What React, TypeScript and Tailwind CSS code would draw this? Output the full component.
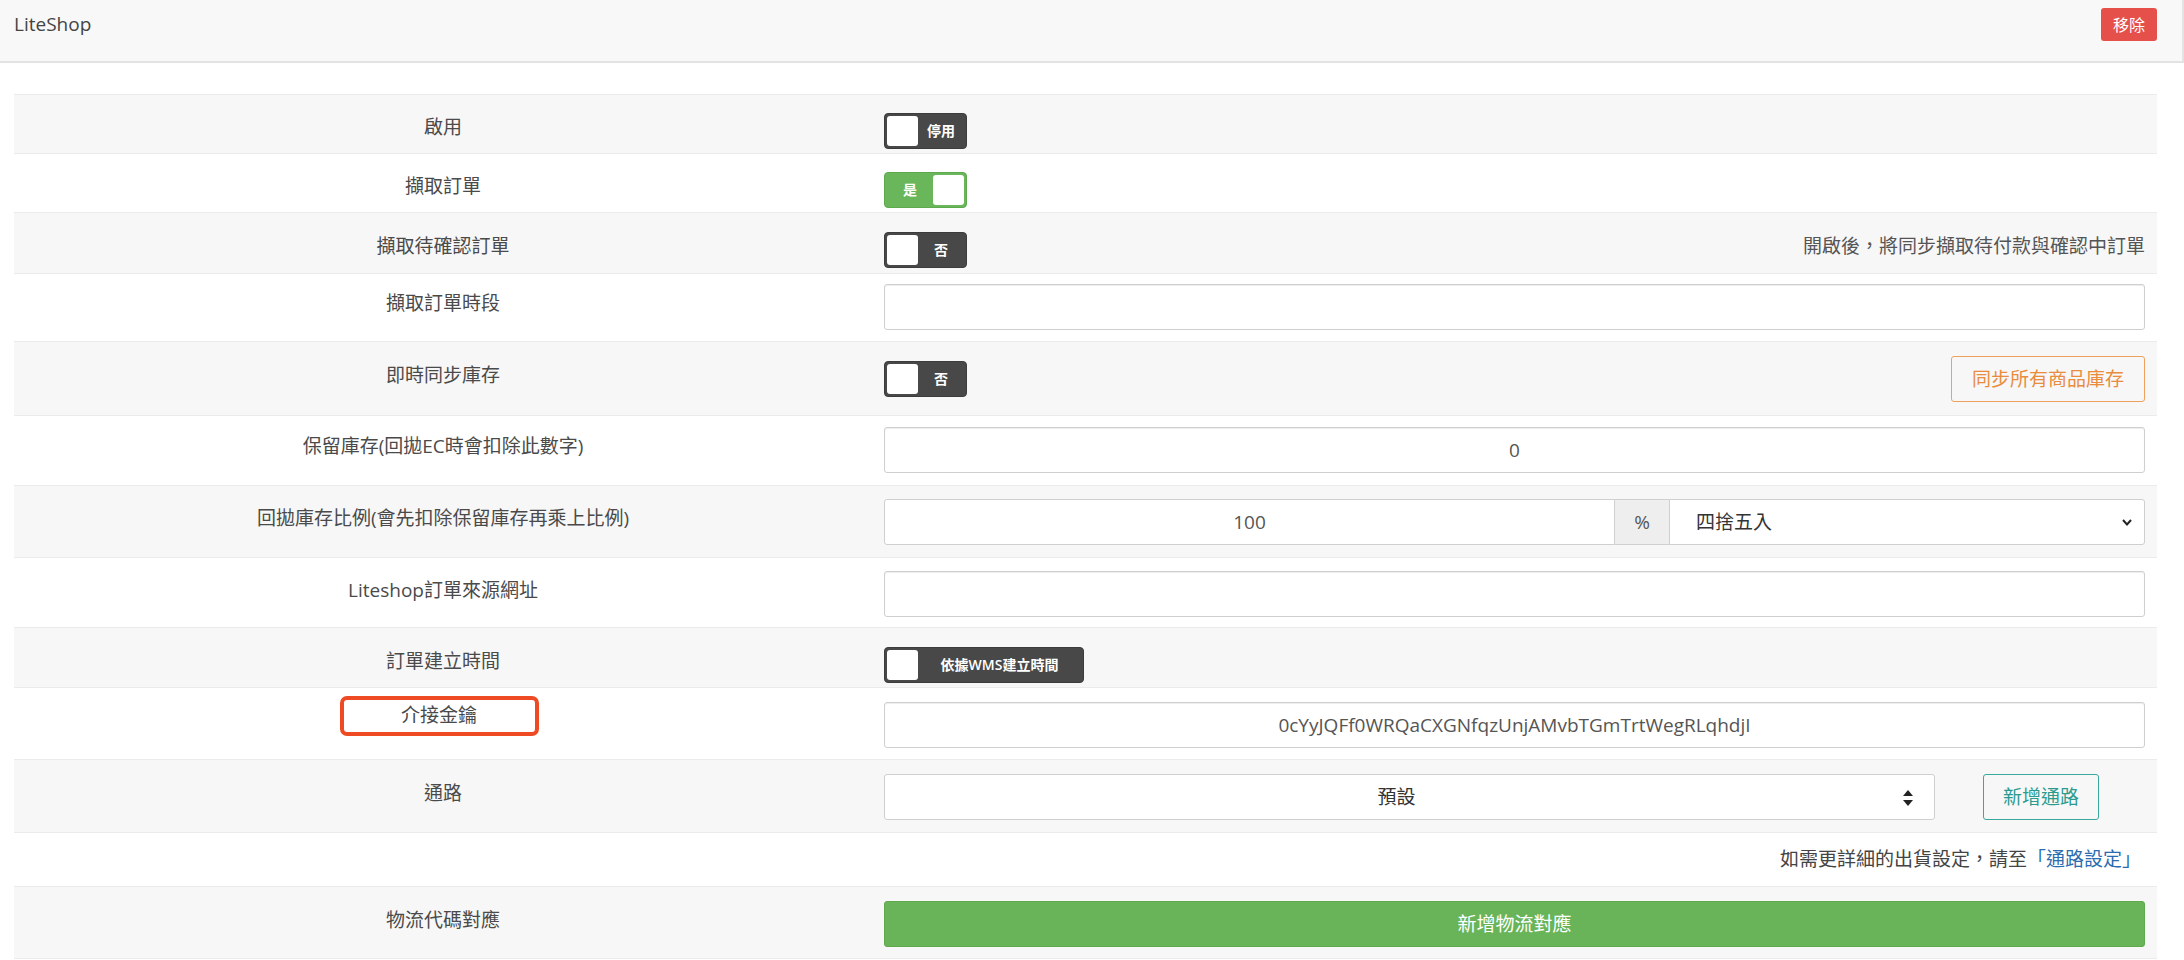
import type { ReactNode } from 'react'

const font = "font-['Open_Sans','Noto_Sans_CJK_TC',sans-serif]"

type ToggleProps = { on?: boolean; text: string; wide?: boolean }

const Toggle = ({ on = false, text, wide = false }: ToggleProps) => {
  if (on) {
    return (
      <div className="flex h-[36px] w-[83px] items-center rounded-[4px] border border-[#5ea94e] bg-[#6ab65a] p-[2px]">
        <span className="flex-1 text-center text-[14px] leading-[20px] font-semibold text-white">{text}</span>
        <span className="h-full w-[31px] rounded-[3px] bg-white" />
      </div>
    )
  }
  return (
    <div
      className={`flex h-[36px] items-center rounded-[4px] border border-[#3c3c3c] bg-[#484848] p-[2px] ${wide ? 'w-[200px]' : 'w-[83px]'}`}
    >
      <span className="h-full w-[31px] rounded-[3px] bg-white" />
      <span className="flex-1 text-center text-[14px] leading-[20px] font-semibold text-white">{text}</span>
    </div>
  )
}

const Input = ({ value = '' }: { value?: string }) => (
  <div className="flex h-[46px] w-full items-center justify-center rounded-[3px] border border-[#cfcfcf] bg-white text-[19px] leading-[26px] text-[#555] shadow-[inset_0_1px_1px_rgba(0,0,0,0.075)]">
    {value}
  </div>
)

type RowProps = { label: ReactNode; pad: string; grey?: boolean; children?: ReactNode }

const Row = ({ label, pad, grey = false, children }: RowProps) => (
  <div className={`flex items-center border-b border-[#ebebeb] ${pad} ${grey ? 'bg-[#f7f7f7]' : 'bg-white'}`}>
    <div className="flex w-[858px] shrink-0 justify-center px-[12px] pb-[8px] text-[19px] leading-[26px] text-[#4a4a4a]">
      {label}
    </div>
    <div className="flex flex-1 items-center px-[12px]">{children}</div>
  </div>
)

export default function App() {
  return (
    <div className={`min-h-screen bg-white ${font}`}>
      <div className="flex h-[63px] items-start justify-between border-b-2 border-r-2 border-[#e3e3e3] bg-[#f8f8f8] pl-[14px] pr-[25px] pt-[8px]">
        <span className="text-[19px] leading-[33px] text-[#444]">LiteShop</span>
        <button className="h-[33px] w-[56px] rounded-[3px] bg-[#e5504b] text-[16px] text-white">移除</button>
      </div>

      <div className="ml-[14px] mr-[27px] mt-[31px] border-t border-[#ebebeb]">
        <Row label="啟用" pad="pt-[18px] pb-[4px]" grey>
          <Toggle text="停用" />
        </Row>
        <Row label="擷取訂單" pad="pt-[18px] pb-[4px]">
          <Toggle on text="是" />
        </Row>
        <Row label="擷取待確認訂單" pad="pt-[19px] pb-[5px]" grey>
          <div className="flex w-full items-center justify-between">
            <Toggle text="否" />
            <span className="pb-[8px] text-[19px] leading-[26px] text-[#555]">開啟後，將同步擷取待付款與確認中訂單</span>
          </div>
        </Row>
        <Row label="擷取訂單時段" pad="pt-[10px] pb-[11px]">
          <Input />
        </Row>
        <Row label="即時同步庫存" pad="pt-[14px] pb-[13px]" grey>
          <div className="flex w-full items-center justify-between">
            <Toggle text="否" />
            <button className="h-[46px] w-[194px] rounded-[3px] border border-[#eea15c] text-[19px] text-[#e98c3e]">
              同步所有商品庫存
            </button>
          </div>
        </Row>
        <Row label="保留庫存(回拋EC時會扣除此數字)" pad="pt-[11px] pb-[12px]">
          <Input value="0" />
        </Row>
        <Row label="回拋庫存比例(會先扣除保留庫存再乘上比例)" pad="pt-[13px] pb-[12px]" grey>
          <div className="flex h-[46px] w-full">
            <div className="flex w-[731px] items-center justify-center rounded-l-[3px] border border-[#cfcfcf] bg-white text-[19px] text-[#555]">
              100
            </div>
            <div className="flex w-[54px] items-center justify-center border-y border-[#cfcfcf] bg-[#eeeeee] text-[19px] text-[#555]">
              %
            </div>
            <div className="flex flex-1 items-center justify-between rounded-r-[3px] border border-[#cfcfcf] bg-white pl-[26px] pr-[9px] text-[19px] text-[#333]">
              <span>四捨五入</span>
              <svg width="16" height="16" viewBox="0 0 16 16">
                <path d="M4 6l4 4.5 4-4.5" fill="none" stroke="#222" strokeWidth="2" />
              </svg>
            </div>
          </div>
        </Row>
        <Row label="Liteshop訂單來源網址" pad="pt-[13px] pb-[10px]">
          <Input />
        </Row>
        <Row label="訂單建立時間" pad="pt-[19px] pb-[4px]" grey>
          <Toggle wide text="依據WMS建立時間" />
        </Row>
        <Row
          label={
            <span className="-mt-[10px] mr-[8px] flex h-[40px] w-[199px] items-center justify-center rounded-[7px] border-4 border-[#ee4a24] pb-[2px]">
              介接金鑰
            </span>
          }
          pad="pt-[14px] pb-[11px]"
        >
          <Input value="0cYyJQFf0WRQaCXGNfqzUnjAMvbTGmTrtWegRLqhdjI" />
        </Row>
        <Row label="通路" pad="pt-[14px] pb-[12px]" grey>
          <div className="flex w-full items-center">
            <div className="relative flex h-[46px] w-[1051px] items-center justify-center rounded-[3px] border border-[#cfcfcf] bg-white text-[19px] text-[#333]">
              <span className="pr-[26px]">預設</span>
              <svg className="absolute right-[20px] top-[14px]" width="12" height="18" viewBox="0 0 12 18">
                <path d="M6 1L11 7H1z" fill="#222" />
                <path d="M1 11h10L6 17z" fill="#222" />
              </svg>
            </div>
            <button className="ml-[48px] h-[46px] w-[116px] rounded-[3px] border border-[#3aa99d] text-[19px] text-[#2c9b8f]">
              新增通路
            </button>
          </div>
        </Row>
        <div className="flex h-[54px] items-center justify-end border-b border-[#ebebeb] bg-white pb-[2px] pr-[16px] text-[19px] leading-[26px] text-[#444]">
          如需更詳細的出貨設定，請至<span className="text-[#2b6cb0]">「通路設定」</span>
        </div>
        <Row label="物流代碼對應" pad="pt-[14px] pb-[11px]" grey>
          <button className="h-[46px] w-full rounded-[3px] border border-[#5fa94f] bg-[#69b459] text-[19px] text-white">
            新增物流對應
          </button>
        </Row>
      </div>
    </div>
  )
}
